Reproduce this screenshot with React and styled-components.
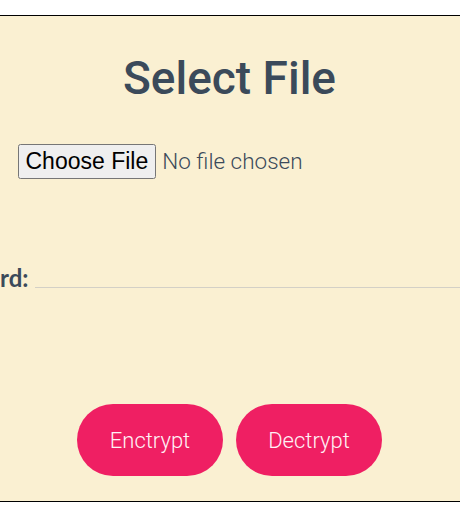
import React from 'react'
import styled, { createGlobalStyle } from 'styled-components';

const GlobalStyle = createGlobalStyle`
  html, body {
    margin: 0;
    padding: 0;
    background: #ffffff;
    overflow: hidden;
  }
`;

const App = () => {
  return <>
    <GlobalStyle />
    <Wrapper>
      <Card>
        <Title>Select File</Title>
        <FileRow>
          <FileInput type="file" />
        </FileRow>
        <PasswordRow>
          <Label htmlFor="password">Password:</Label>
          <PasswordInput id="password" type="password" />
        </PasswordRow>
        <Actions>
          <ActionButton>Enctrypt</ActionButton>
          <ActionButton>Dectrypt</ActionButton>
        </Actions>
      </Card>
    </Wrapper>
  </>
};

const Wrapper = styled.div`
  display: flex;
  justify-content: center;
  padding-top: 15px;
  width: 459px;
`;

const Card = styled.div`
  flex-shrink: 0;
  box-sizing: border-box;
  width: 660px;
  height: 487px;
  border: 1px solid #000;
  background-color: #faf0d2;
  display: flex;
  flex-direction: column;
  align-items: center;
`;

const Title = styled.h1`
  margin: 34px 0 0;
  font-family: Roboto, sans-serif;
  font-weight: 500;
  font-size: 46px;
  line-height: 56px;
  color: #3b4a5a;
`;

const FileRow = styled.div`
  align-self: stretch;
  display: flex;
  padding-left: 117px;
  margin-top: 38px;
`;

const FileInput = styled.input`
  font-family: Roboto, sans-serif;
  font-weight: 300;
  font-size: 22.5px;
  color: #3b4a5a;

  &::file-selector-button {
    font-family: "Liberation Sans", Arial, sans-serif;
    font-weight: 400;
    font-size: 23px;
    color: #000;
    padding: 2px 6px;
    margin-right: 6px;
  }
`;

const PasswordRow = styled.div`
  align-self: stretch;
  display: flex;
  align-items: flex-end;
  gap: 6px;
  padding-left: 8px;
  margin-top: 85px;
`;

const Label = styled.label`
  width: 120px;
  flex-shrink: 0;
  text-align: right;
  font-family: Lato, sans-serif;
  font-weight: 700;
  font-size: 24px;
  line-height: 20px;
  color: #3b4a5a;
`;

const PasswordInput = styled.input`
  flex: 1;
  box-sizing: border-box;
  height: 24px;
  padding: 0;
  border: none;
  border-bottom: 1px solid #d3d0c6;
  background: transparent;
  outline: none;
  font-size: 18px;
`;

const Actions = styled.div`
  display: flex;
  gap: 13px;
  margin-top: auto;
  margin-bottom: 25px;
`;

const ActionButton = styled.button`
  width: 146px;
  height: 72px;
  border: none;
  border-radius: 36px;
  background-color: #ef1f63;
  color: #fff2f6;
  font-family: Roboto, sans-serif;
  font-weight: 300;
  font-size: 22px;
  cursor: pointer;
`;

export default App
